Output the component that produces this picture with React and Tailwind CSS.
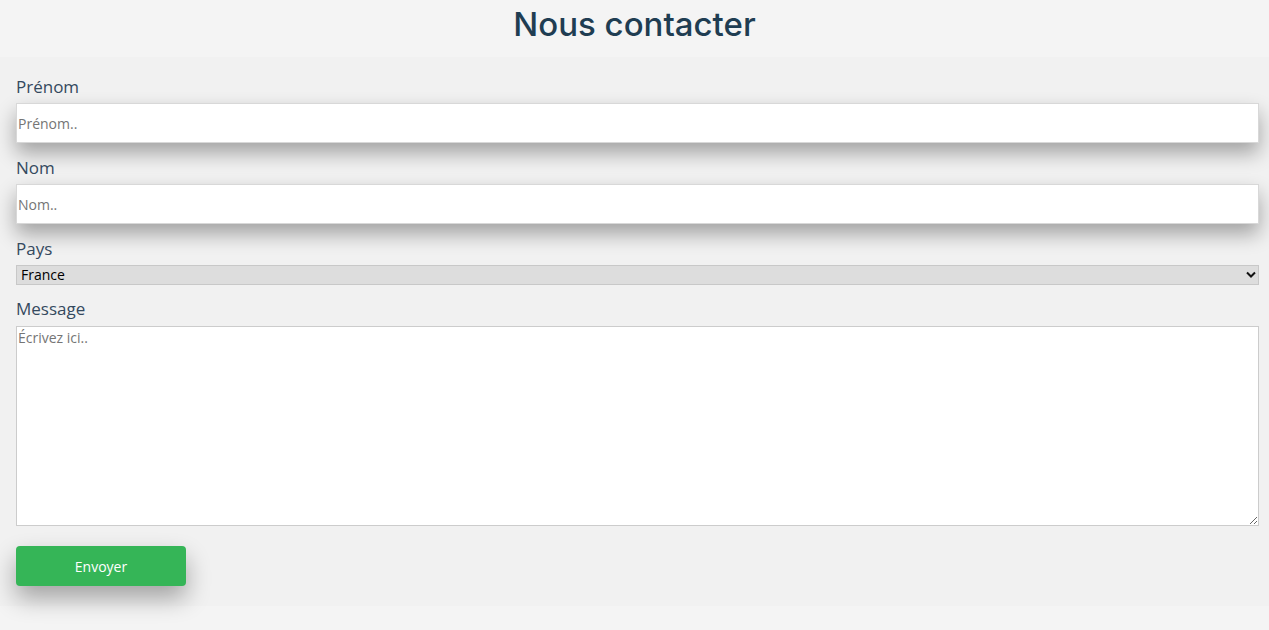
export default function App() {
  const font = { fontFamily: '"Open Sans", "Noto Sans", sans-serif' };
  return (
    <div className="min-h-[630px] bg-[#f4f4f4] text-[#2c3e50]" style={font}>
      <h1 className="h-[57px] pt-[2px] text-center font-['Inter',sans-serif] text-[33px] font-medium leading-[44px] text-[#1f3d52]">
        Nous contacter
      </h1>
      <form className="bg-[#f1f1f1] pl-4 pr-[10px] pt-[18px] pb-5">
        <label className="block text-[17px] leading-6 text-[#34495e]">Prénom</label>
        <input
          type="text"
          placeholder="Prénom.."
          className="mt-1 block h-10 w-full border border-[#d8d8d8] bg-white px-[1px] text-[14px] shadow-[0_10px_20px_rgba(0,0,0,0.33)] outline-none placeholder:text-[#757575]"
        />
        <label className="mt-[13px] block text-[17px] leading-6 text-[#34495e]">Nom</label>
        <input
          type="text"
          placeholder="Nom.."
          className="mt-1 block h-10 w-full border border-[#d8d8d8] bg-white px-[1px] text-[14px] shadow-[0_10px_20px_rgba(0,0,0,0.33)] outline-none placeholder:text-[#757575]"
        />
        <label className="mt-[13px] block text-[17px] leading-6 text-[#34495e]">Pays</label>
        <div className="relative mt-1">
          <select className="block h-5 w-full appearance-none border border-[#c8c8c8] bg-[#dddddd] pl-1 text-[14px] leading-[18px] text-black outline-none">
            <option>France</option>
            <option>Belgique</option>
            <option>Suisse</option>
          </select>
          <svg
            className="pointer-events-none absolute right-[3px] top-[6px]"
            width="10"
            height="8"
            viewBox="0 0 10 8"
          >
            <path d="M1 1.5 L5 5.5 L9 1.5" fill="none" stroke="#111" strokeWidth="2" />
          </svg>
        </div>
        <label className="mt-3 block text-[17px] leading-6 text-[#34495e]">Message</label>
        <textarea
          placeholder="Écrivez ici.."
          className="mt-[5px] block h-[200px] w-full border border-[#cccccc] bg-white px-[1px] text-[14px] outline-none placeholder:text-[#757575]"
        />
        <button
          type="button"
          className="mt-5 h-10 w-[170px] rounded bg-[#35b557] text-[14px] text-white shadow-[0_12px_24px_rgba(0,0,0,0.33)]"
        >
          Envoyer
        </button>
      </form>
    </div>
  );
}
